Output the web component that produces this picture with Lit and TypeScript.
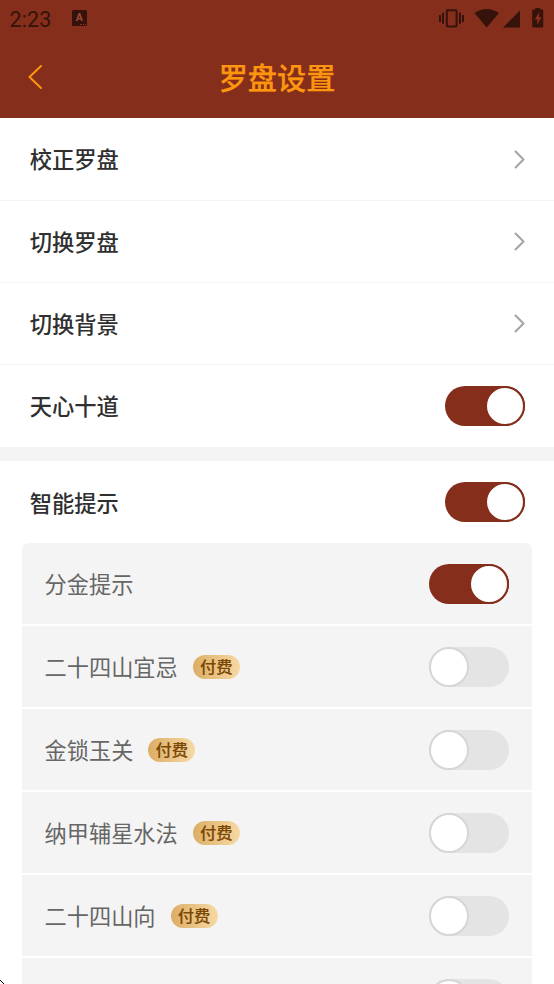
import { LitElement, html, css } from "lit";
import { customElement, property } from "lit/decorators.js";

@customElement("toggle-switch")
class ToggleSwitch extends LitElement {
  @property({ type: Boolean, reflect: true }) on = false;
  static styles = css`
    :host { display: flex; box-sizing: border-box; width: 80px; height: 40px; border-radius: 20px; background: #e4e4e4; flex: none; }
    :host([on]) { background: #852e1b; justify-content: flex-end; }
    .knob { box-sizing: border-box; width: 40px; height: 40px; border-radius: 50%; border: 2px solid #d6d6d6; background: #fff; }
    :host([on]) .knob { border-color: #852e1b; }
  `;
  render() { return html`<div class="knob"></div>`; }
}

@customElement("status-bar")
class StatusBar extends LitElement {
  static styles = css`
    :host { display: flex; height: 36px; padding: 0 9px 0 9.500px; align-items: center; color: #35130b; }
    .time { font: 400 21.5px/36px Roboto, sans-serif; letter-spacing: 0.1px; padding-top: 3px; width: 62.500px; }
    svg { display: block; fill: currentColor; }
    .badge { position: relative; font: 700 10.500px/15px Roboto, sans-serif; width: 14.5px; height: 15.5px; border-radius: 1.5px; background: #35130b; color: #a34a35; text-align: center; }
    .badge::after { content: ""; position: absolute; right: 1px; bottom: 1px; width: 6px; border-bottom: 1px dotted #852e1b; }
    .right { margin-left: auto; }
  `;
  render() {
    return html`
      <div class="time">2:23</div>
      <div class="badge">A</div>
      <svg class="right" width="106" height="36" viewBox="439 0 106 36">
        <path d="M439 15h2v7h-2zM442 12.7h2v11h-2zM459 12.7h2v11h-2zM462 15h2v7h-2z"/>
        <rect x="446.8" y="10.2" width="9.8" height="16.4" rx="1" fill="none" stroke="currentColor" stroke-width="2"/>
        <path d="M474.4 13.1Q486.7 4.8 499 13.1L486.7 27.4zM520 10.6V27.6H503zM532.2 10.5q0-1 1-1h2V8h5v1.500h2q1 0 1 1v16q0 1-1 1h-9q-1 0-1-1z"/>
        <path d="M539.300 12l-4.500 7.500h2.500v5.500l4.200-8h-2.500z" fill="#852e1b"/>
      </svg>`;
  }
}

@customElement("app-root")
class AppRoot extends LitElement {
  static styles = css`
    :host { display: block; height: 984px; overflow: hidden; background: #fff; font-family: "Noto Sans CJK SC", sans-serif; position: relative; }
    .head { background: #852e1b; height: 118.4px; }
    .bar { display: grid; grid-template-columns: 28px 1fr 28px; align-items: center; height: 82px; padding: 0 23px; }
    .bar svg { display: block; }
    .title { text-align: center; color: #fd960f; font-size: 29.2px; line-height: 40px; font-weight: 500; -webkit-text-stroke: 0.25px #fd960f; padding-bottom: 2px; }
    .row { box-sizing: border-box; display: flex; align-items: center; justify-content: space-between; height: 82.15px; padding: 0 29.3px 0 29.7px; font-size: 22.3px; font-weight: 500; color: #303030; border-bottom: 1px solid #f4f4f4; }
    .row span { padding-bottom: 1px; }
    .row.last { border-color: transparent; padding-top: 1px; }
    .gap { height: 14px; background: #f4f4f4; }
    .panel { margin: 0 22.300px; border-radius: 7px 7px 0 0; overflow: hidden; }
    .sub { display: flex; align-items: center; height: 81px; margin-bottom: 2px; padding: 0 22.300px; background: #f4f4f4; font-size: 22.2px; color: #666; }
    .sub span { padding-bottom: 1px; }
    .sub toggle-switch { margin-left: auto; }
    .sub .pay { box-sizing: border-box; padding: 0; margin-left: 15px; width: 47px; height: 24px; border-radius: 12px; background: linear-gradient(90deg, #dcae66, #f7d9a4); color: #7b4704; font-size: 16.300px; line-height: 23px; font-weight: 500; text-align: center; -webkit-text-stroke: 0.15px #7b4704; }
    .cursor { position: absolute; left: 0; bottom: 0; display: block; }
  `;
  private links = ["校正罗盘", "切换罗盘", "切换背景"];
  private hints = [
    { name: "分金提示", paid: false },
    { name: "二十四山宜忌", paid: true },
    { name: "金锁玉关", paid: true },
    { name: "纳甲辅星水法", paid: true },
    { name: "二十四山向", paid: true },
    { name: "", paid: false, off: true },
  ];
  render() {
    return html`
      <div class="head">
        <status-bar></status-bar>
        <div class="bar">
          <svg width="24" height="28" viewBox="0 0 24 28" fill="none" stroke="#fd960f" stroke-width="2" stroke-linecap="round" stroke-linejoin="round"><path d="M18 3L6.500 14L18 25"/></svg>
          <div class="title">罗盘设置</div>
        </div>
      </div>
      ${this.links.map((t) => html`<div class="row"><span>${t}</span>
        <svg width="11" height="20" viewBox="0 0 11 20" fill="none" stroke="#a3a3a3" stroke-width="2" stroke-linecap="round" stroke-linejoin="round"><path d="M1.500 2.500L9.500 10.500L1.500 18.500"/></svg></div>`)}
      <div class="row last"><span>天心十道</span><toggle-switch on></toggle-switch></div>
      <div class="gap"></div>
      <div class="row last"><span>智能提示</span><toggle-switch on></toggle-switch></div>
      <div class="panel">
        ${this.hints.map((h) => html`<div class="sub"><span>${h.name}</span>${h.paid ? html`<span class="pay">付费</span>` : ""}
          <toggle-switch ?on=${!h.paid && !h.off}></toggle-switch></div>`)}
      </div>
      <svg class="cursor" width="5" height="5" viewBox="0 0 5 5" shape-rendering="crispEdges"><path d="M0 1h1v1H0zM1 2h1v1H1zM2 3h1v1H2zM3 4h1v1H3z"/></svg>`;
  }
}
